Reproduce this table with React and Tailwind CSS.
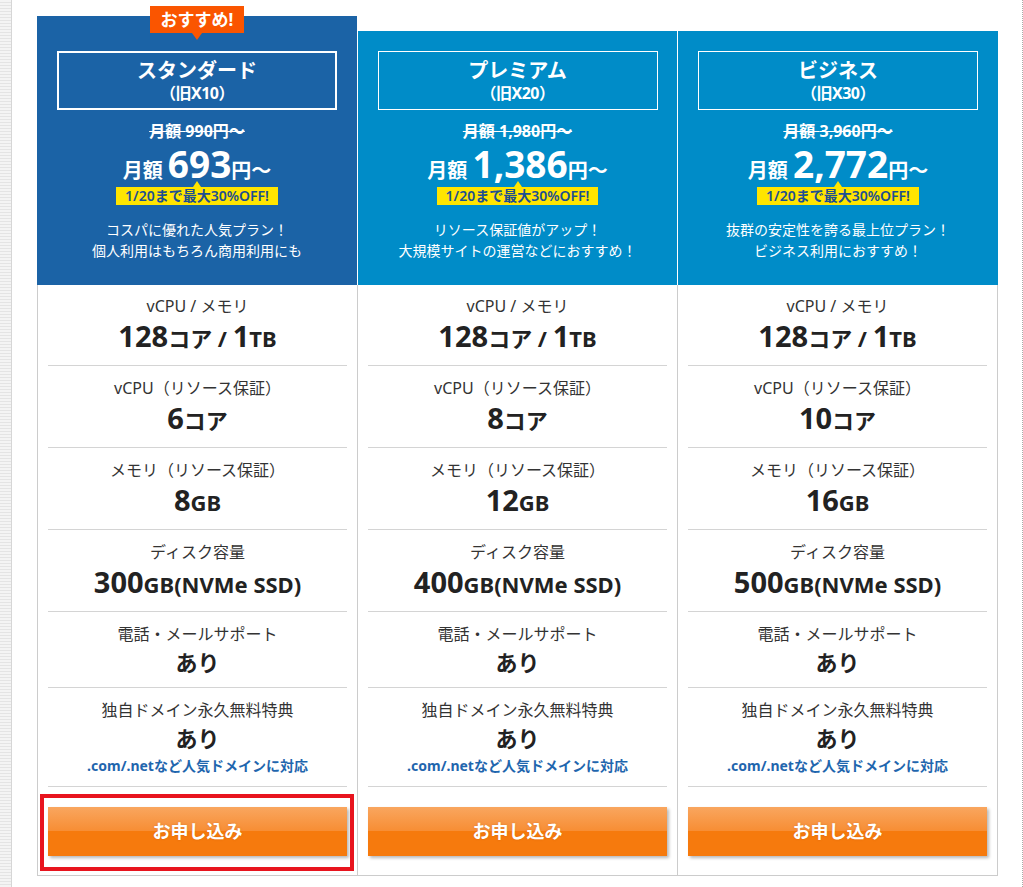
import React from "react";

const plans = [
  {
    name: "スタンダード",
    old: "（旧X10）",
    was: "990",
    price: "693",
    desc: ["コスパに優れた人気プラン！", "個人利用はもちろん商用利用にも"],
    cpu: "6",
    mem: "8",
    disk: "300",
    featured: true,
  },
  {
    name: "プレミアム",
    old: "（旧X20）",
    was: "1,980",
    price: "1,386",
    desc: ["リソース保証値がアップ！", "大規模サイトの運営などにおすすめ！"],
    cpu: "8",
    mem: "12",
    disk: "400",
  },
  {
    name: "ビジネス",
    old: "（旧X30）",
    was: "3,960",
    price: "2,772",
    desc: ["抜群の安定性を誇る最上位プラン！", "ビジネス利用におすすめ！"],
    cpu: "10",
    mem: "16",
    disk: "500",
  },
];

const Big = ({ children }) => <span className="text-[29px]">{children}</span>;

const Header = ({ plan, last }) => (
  <div
    className={`relative flex flex-col items-center text-white ${
      plan.featured
        ? "w-[320px] h-[269px] pt-[35px] bg-[#1b63a6]"
        : `${last ? "w-[320px]" : "w-[319px]"} h-[254px] pt-[20px] bg-[#008cc8]`
    }`}
  >
    {plan.featured && (
      <div className="absolute left-1/2 -translate-x-1/2 top-[-10px] w-[94px] h-[27px] bg-[#fa5500] flex items-center justify-center text-[17px] font-bold leading-none">
        おすすめ!
        <span className="absolute left-1/2 -translate-x-1/2 top-[27px] w-0 h-0 border-l-[5px] border-r-[5px] border-t-[7px] border-l-transparent border-r-transparent border-t-[#fa5500]" />
      </div>
    )}

    {/* name box */}
    <div
      className={`w-[280px] h-[59px] flex flex-col items-center justify-center border-white font-bold ${
        plan.featured ? "border-2" : "border"
      }`}
    >
      <div className="text-[20px] leading-[26px]">{plan.name}</div>
      <div className="text-[16px] leading-[19px] tracking-[-0.5px]">{plan.old}</div>
    </div>

    {/* prices */}
    <div className="mt-[11px] h-[20px] text-[16px] leading-[20px] font-bold line-through">
      月額 {plan.was}円〜
    </div>
    <div className="mt-[3px] h-[40px] leading-[40px] font-bold whitespace-nowrap">
      <span className="text-[20px]">月額 </span>
      <span className="text-[37px]">{plan.price}</span>
      <span className="text-[20px]">円〜</span>
    </div>
    <div className="relative mt-[3px] h-[18px] px-[9px] bg-[#ffe500] text-[#1d4f91] text-[14px] leading-[18px] font-semibold whitespace-nowrap">
      1/20まで最大30%OFF!
      <span className="absolute left-1/2 -translate-x-1/2 top-[-6px] w-0 h-0 border-l-[4px] border-r-[4px] border-b-[6px] border-l-transparent border-r-transparent border-b-[#ffe500]" />
    </div>

    {/* description */}
    <div className="mt-[14px] text-[14px] leading-[21px] text-center">
      {plan.desc.map((d) => (
        <div key={d}>{d}</div>
      ))}
    </div>
  </div>
);

const Row = ({ label, children, note, className, valueGap }) => (
  <div className={`border-b border-[#d4d4d4] flex flex-col items-center ${className}`}>
    <div className="h-[24px] text-[16px] leading-[24px] text-[#333]">{label}</div>
    <div
      className={`h-[32px] flex items-center text-[22px] leading-[32px] font-bold text-[#222] whitespace-nowrap ${valueGap}`}
    >
      <span>{children}</span>
    </div>
    {note && (
      <div className="mt-[2px] h-[20px] text-[14px] leading-[20px] font-bold text-[#1f66ae]">
        {note}
      </div>
    )}
  </div>
);

const Column = ({ plan, first, last }) => (
  <div className={`flex flex-col ${first ? "w-[321px]" : "w-[320px] mt-[15px]"}`}>
    <Header plan={plan} last={last} />

    <div
      className={`relative flex flex-col px-[10px] border-r border-b border-[#cccccc] ${
        first ? "border-l" : ""
      }`}
    >
      <Row label="vCPU / メモリ" className="pt-[9px] pb-[12px]" valueGap="mt-[3px]">
        <Big>128</Big>コア / <Big>1</Big>TB
      </Row>
      <Row label="vCPU（リソース保証）" className="pt-[10px] pb-[12px]" valueGap="mt-[3px]">
        <Big>{plan.cpu}</Big>コア
      </Row>
      <Row label="メモリ（リソース保証）" className="pt-[10px] pb-[12px]" valueGap="mt-[3px]">
        <Big>{plan.mem}</Big>GB
      </Row>
      <Row label="ディスク容量" className="pt-[10px] pb-[12px]" valueGap="mt-[3px]">
        <Big>{plan.disk}</Big>GB(NVMe SSD)
      </Row>
      <Row label="電話・メールサポート" className="pt-[10px] pb-[9px]">
        あり
      </Row>
      <Row
        label="独自ドメイン永久無料特典"
        note=".com/.netなど人気ドメインに対応"
        className="pt-[10px] pb-[10px]"
      >
        あり
      </Row>

      <div className="pt-[20px] pb-[19px]">
        <button className="w-full h-[49px] flex items-center justify-center text-white text-[18px] font-bold bg-[linear-gradient(to_bottom,#f9a65f_0%,#f78d33_50%,#f67a0d_50%,#f67a0d_100%)] shadow-[2px_2px_3px_rgba(0,0,0,0.28)] [text-shadow:0_0_2px_rgba(160,70,0,0.35)]">
          お申し込み
        </button>
      </div>

      {first && (
        <div className="absolute left-[2px] bottom-[4px] w-[314px] h-[77px] border-[4px] border-[#e8141e] pointer-events-none" />
      )}
    </div>
  </div>
);

export default function App() {
  return (
    <div className="w-[1023px] h-[887px] overflow-hidden bg-white flex font-['Noto_Sans','Noto_Sans_CJK_JP',sans-serif]">
      {/* left striped gutter */}
      <div className="w-[12px] h-full shrink-0 border-r border-[#d6d6d6] bg-[repeating-linear-gradient(to_bottom,#f4f4f4_0px,#f4f4f4_2px,#e4e4e4_2px,#e4e4e4_3px)]" />

      <div className="pl-[25px] pt-[16px] flex items-start">
        {plans.map((p, i) => (
          <Column key={p.name} plan={p} first={i === 0} last={i === plans.length - 1} />
        ))}
      </div>

      <div className="ml-auto w-px h-full border-l border-dotted border-[#aaaaaa]" />
    </div>
  );
}
